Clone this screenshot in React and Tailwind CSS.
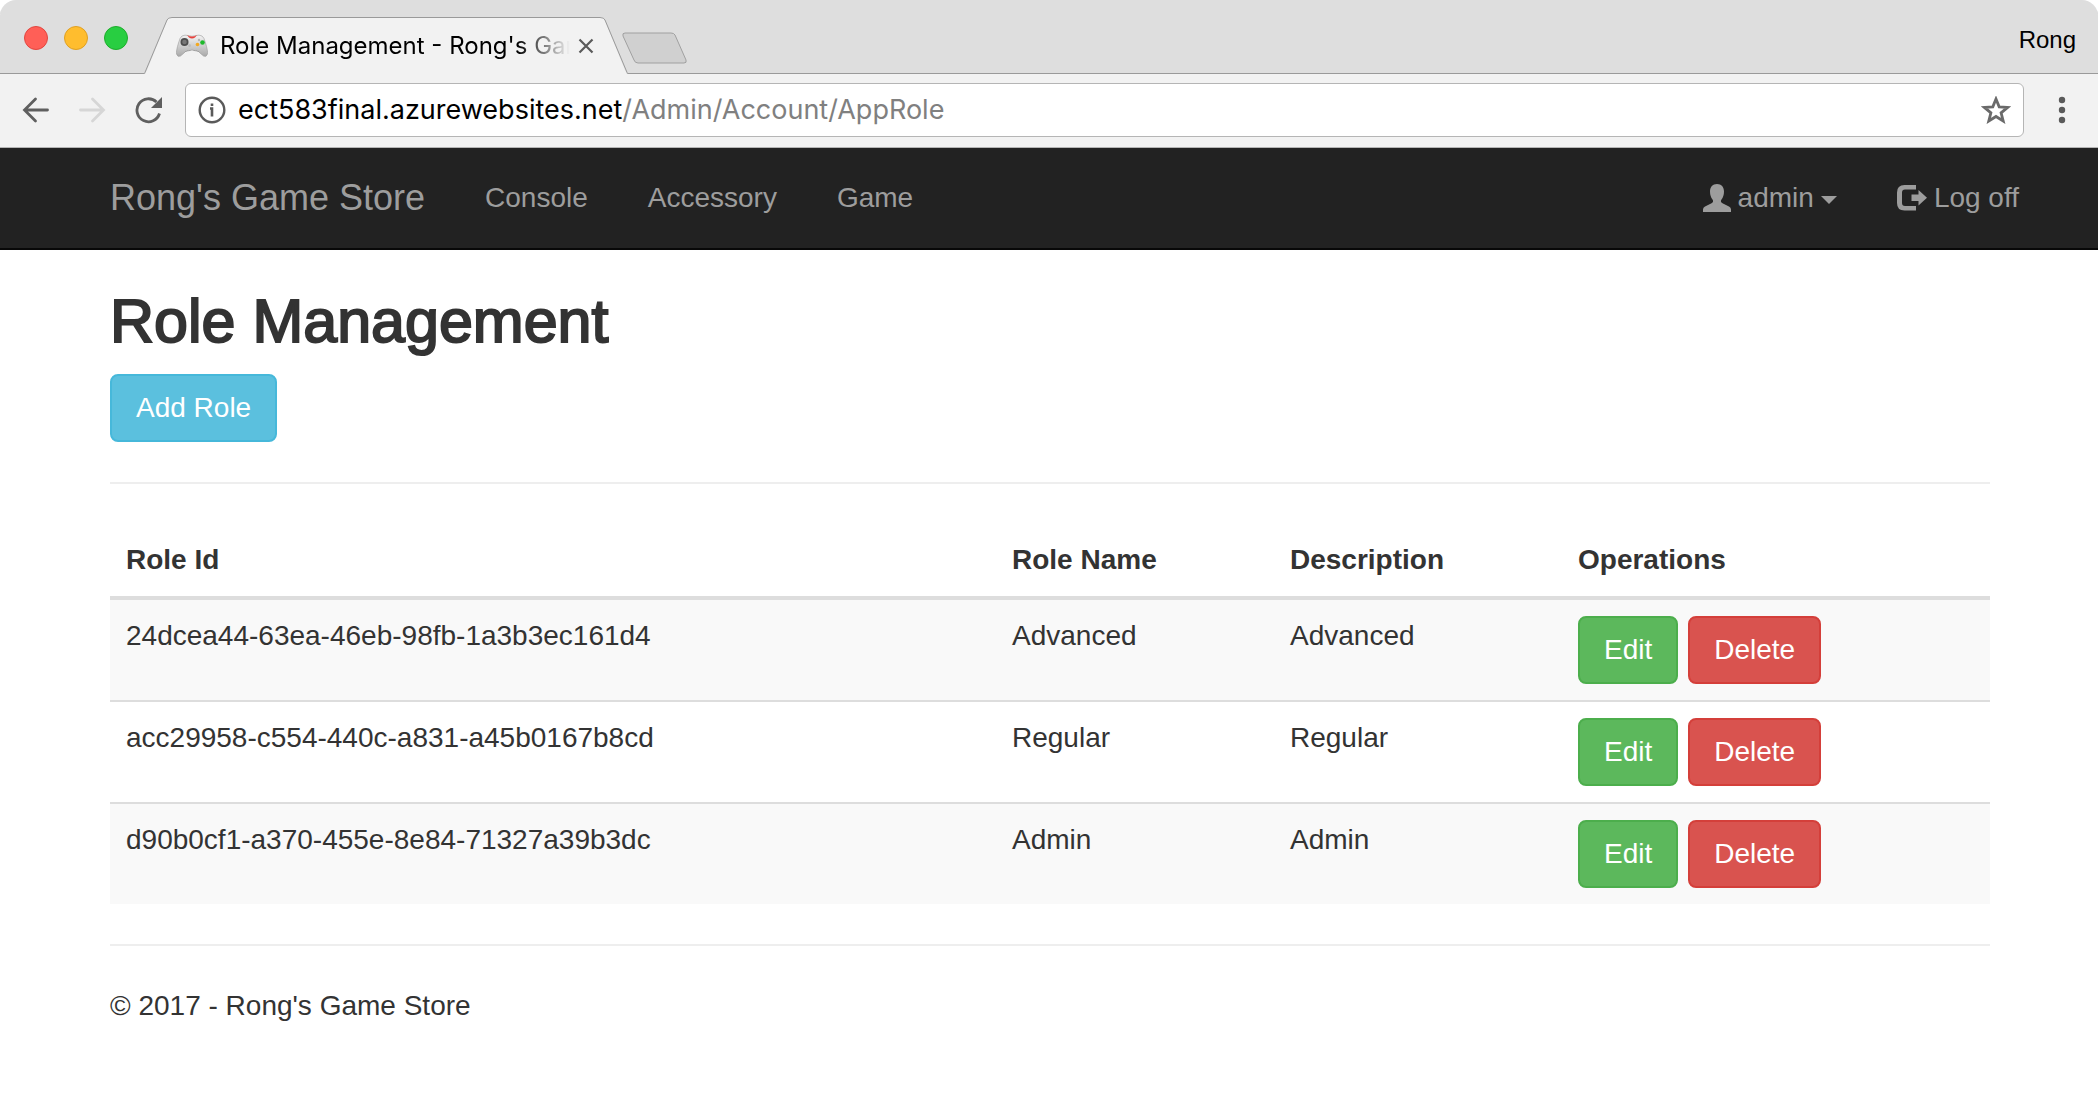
import { useState } from "react";

const roles = [
  { id: "24dcea44-63ea-46eb-98fb-1a3b3ec161d4", name: "Advanced", description: "Advanced" },
  { id: "acc29958-c554-440c-a831-a45b0167b8cd", name: "Regular", description: "Regular" },
  { id: "d90b0cf1-a370-455e-8e84-71327a39b3dc", name: "Admin", description: "Admin" },
];

const btn = "rounded-lg border-2 px-6 py-3 text-[28px] leading-10 text-white";

function GamepadIcon() {
  return (
    <svg viewBox="0 0 32 32" className="size-8 shrink-0">
      <defs>
        <linearGradient id="pad" x1="0" y1="0" x2="0" y2="1">
          <stop offset="0" stopColor="#f4f4f4" />
          <stop offset="1" stopColor="#a9a9a9" />
        </linearGradient>
      </defs>
      <path
        d="M6 6 Q9 4.500 12 5.500 Q16 7 20 5.500 Q23 4.500 26 6 Q28 7 29.500 13 Q32 21 31.500 24 Q30.500 27.500 27.500 26 Q25 24 22.500 21.500 Q16 18.500 9.500 21.500 Q7 24 4.500 26 Q1.500 27.500 0.500 24 Q0 21 2.500 13 Q4 7 6 6Z"
        fill="url(#pad)"
        stroke="#9a9a9a"
        strokeWidth="0.6"
      />
      <path d="M9.500 21.500 Q16 18.500 22.500 21.500 L25 24 Q22 20 16 20 Q10 20 7 24Z" fill="#333" />
      <path d="M11 5 Q16 8 21 5 L19 7.500 Q16 9.500 13 7.500Z" fill="#e8413c" />
      <circle cx="8.500" cy="12" r="4" fill="#4e4e4e" />
      <circle cx="8.500" cy="12" r="2.300" fill="#777" />
      <circle cx="26.500" cy="12.500" r="2.300" fill="#1db92b" />
      <circle cx="21.500" cy="14.500" r="1.800" fill="#f4a81d" />
      <circle cx="23" cy="10" r="1.200" fill="#b5b5b5" />
      <circle cx="13.500" cy="15.500" r="1.500" fill="#bdbdbd" />
    </svg>
  );
}

function TabStrip() {
  return (
    <div className="flex h-[74px] items-end justify-between rounded-t-2xl bg-[#dedede] shadow-[inset_0_-1px_0_#9a9a9a]">
      <div className="flex items-end">
        <div className="flex h-[74px] w-[144px] items-center gap-4 pt-[2px] pl-6" aria-label="Window controls">
          <button aria-label="Close window" className="size-6 rounded-full border border-[#e2463f] bg-[#ff5f57]" />
          <button aria-label="Minimize window" className="size-6 rounded-full border border-[#dfa023] bg-[#ffbd2e]" />
          <button aria-label="Zoom window" className="size-6 rounded-full border border-[#1dad2b] bg-[#28ce41]" />
        </div>
        <div className="flex items-end">
          <svg viewBox="0 0 28 57" className="h-[57px] w-7">
            <path d="M0 57 Q2 56 3 53 L23 4 Q24 0 28 0 V57Z" fill="#f2f2f2" />
            <path d="M0 56.500 Q1 56 2 53 L23 3 Q24 0.500 28 0.500" fill="none" stroke="#9a9a9a" />
          </svg>
          <div className="flex h-[57px] w-[428px] items-center border-t border-[#9a9a9a] bg-[#f2f2f2] pl-1">
            <GamepadIcon />
            <span className="ml-3 w-[350px] overflow-hidden whitespace-nowrap bg-linear-to-r from-black from-85% to-transparent bg-clip-text font-['Inter',sans-serif] text-[24px] text-transparent">
              Role Management - Rong's Game Store
            </span>
            <button aria-label="Close tab" className="ml-2">
              <svg viewBox="0 0 16 16" className="size-4">
                <path d="M1.500 1.500L14.500 14.500M14.500 1.500L1.500 14.500" stroke="#5a5a5a" strokeWidth="2.200" />
              </svg>
            </button>
          </div>
          <svg viewBox="0 0 28 57" className="h-[57px] w-7">
            <path d="M28 57 Q26 56 25 53 L5 4 Q4 0 0 0 V57Z" fill="#f2f2f2" />
            <path d="M28 56.500 Q27 56 26 53 L5 3 Q4 0.500 0 0.500" fill="none" stroke="#9a9a9a" />
          </svg>
        </div>
        <button aria-label="New tab" className="-ml-1.5 mb-[10px]">
          <svg viewBox="0 0 66 32" className="h-8 w-[66px]">
            <path d="M3 1 H49 Q52 1 53 3 L64 28 Q65 31 62 31 H16 Q13 31 12 28 L1 4 Q0 1 3 1Z" fill="#d0d0d0" stroke="#a0a0a0" />
          </svg>
        </button>
      </div>
      <span className="pr-[22px] pb-[18px] text-[24px] leading-8 text-black">Rong</span>
    </div>
  );
}

function Toolbar() {
  return (
    <div className="flex h-[74px] items-center border-b border-[#b5b5b5] bg-[#f2f2f2] pr-8 pb-[2px] pl-[22px]">
      <button aria-label="Back">
        <svg viewBox="0 0 28 28" className="size-7" fill="none" stroke="#5f5f5f" strokeWidth="2.800" strokeLinecap="round">
          <path d="M25.500 14H3M13.500 3L2.500 14L13.500 25" />
        </svg>
      </button>
      <button aria-label="Forward" className="ml-7">
        <svg viewBox="0 0 28 28" className="size-7" fill="none" stroke="#d6d6d6" strokeWidth="2.800" strokeLinecap="round">
          <path d="M2.500 14H25M14.500 3L25.500 14L14.500 25" />
        </svg>
      </button>
      <button aria-label="Reload" className="ml-7">
        <svg viewBox="0 0 28 28" className="size-7">
          <path d="M25.500 17.500A11.500 11.500 0 1 1 22.500 6" fill="none" stroke="#5f5f5f" strokeWidth="2.800" />
          <path d="M28 1V12H17Z" fill="#5f5f5f" />
        </svg>
      </button>
      <div className="ml-[23px] flex h-[54px] flex-1 items-center rounded-md border border-[#b5b5b5] bg-white px-3 font-['Inter',sans-serif] text-[27px]">
        <svg viewBox="0 0 28 28" className="size-7">
          <circle cx="14" cy="14" r="12.300" fill="none" stroke="#5a5a5a" strokeWidth="2.400" />
          <path d="M12 12.500H14V20.500M14 7.500V10" fill="none" stroke="#5a5a5a" strokeWidth="2.600" />
        </svg>
        <div role="textbox" aria-label="Address" className="ml-3 flex-1 whitespace-nowrap text-[#808080]">
          <span className="text-black">ect583final.azurewebsites.net</span>/Admin/Account/AppRole
        </div>
        <button aria-label="Bookmark this page">
          <svg viewBox="0 0 30 28" className="h-7 w-[30px]">
            <path d="M15 3L18.200 10.800L26.600 11.400L20.100 16.800L22.200 25L15 20.500L7.800 25L9.900 16.800L3.400 11.400L11.800 10.800Z" fill="none" stroke="#6a6a6a" strokeWidth="2.800" />
          </svg>
        </button>
      </div>
      <button aria-label="Menu" className="ml-[34px]">
        <svg viewBox="0 0 8 28" className="h-7 w-2">
          <circle cx="4" cy="4" r="3.200" fill="#5a5a5a" />
          <circle cx="4" cy="14" r="3.200" fill="#5a5a5a" />
          <circle cx="4" cy="24" r="3.200" fill="#5a5a5a" />
        </svg>
      </button>
    </div>
  );
}

function Navbar() {
  const [open, setOpen] = useState(false);

  return (
    <nav className="flex items-center justify-between border-b-2 border-[#080808] bg-[#222] py-[30px] pr-[79px] pl-[110px] text-[28px] leading-10 text-[#9d9d9d]">
      <div className="flex items-center gap-[60px]">
        <a href="#" className="text-[36px]">Rong's Game Store</a>
        <a href="#console">Console</a>
        <a href="#accessory">Accessory</a>
        <a href="#game">Game</a>
      </div>
      <div className="flex items-center gap-[60px]">
        <button onClick={() => setOpen(!open)} aria-expanded={open} className="flex items-center gap-[7px]">
          <svg viewBox="0 0 28 28" className="size-7" fill="currentColor">
            <path d="M14 0C18.500 0 21 3 21 7.500C21 11 20 13.500 18.500 15.500C17.500 17 17.800 18.500 19.500 19.300L26 22.500Q28 23.500 28 25.500V28H0V25.500Q0 23.500 2 22.500L8.500 19.300C10.200 18.500 10.500 17 9.500 15.500C8 13.500 7 11 7 7.500C7 3 9.500 0 14 0Z" />
          </svg>
          admin
          <svg viewBox="0 0 16 8" className="mt-1 h-2 w-4" fill="currentColor">
            <path d="M0 0H16L8 8Z" />
          </svg>
        </button>
        <a href="#logoff" className="flex items-center gap-[7px]">
          <svg viewBox="0 0 30 28" className="h-7 w-[30px]" fill="currentColor">
            <path d="M19 1V5.500H8Q5 5.500 5 8.500V19Q5 22 8 22H19V26.500H7.500Q0 26.500 0 19V8.500Q0 1 7.500 1Z" />
            <path d="M21.500 6L30 13.800L21.500 21.500V17H14.500V10.500H21.500Z" />
          </svg>
          Log off
        </a>
      </div>
    </nav>
  );
}

function RoleTable() {
  return (
    <table className="w-full table-fixed text-left">
      <thead>
        <tr className="border-b-4 border-[#ddd]">
          <th className="p-4">Role Id</th>
          <th className="w-[278px] p-4">Role Name</th>
          <th className="w-[288px] p-4">Description</th>
          <th className="w-[428px] p-4">Operations</th>
        </tr>
      </thead>
      <tbody>
        {roles.map((role) => (
          <tr key={role.id} className="border-t-2 border-[#ddd] align-top odd:bg-[#f9f9f9]">
            <td className="p-4">{role.id}</td>
            <td className="p-4">{role.name}</td>
            <td className="p-4">{role.description}</td>
            <td className="p-4">
              <div className="flex gap-[10px]">
                <button className={`${btn} border-[#4cae4c] bg-[#5cb85c]`}>Edit</button>
                <button className={`${btn} border-[#d43f3a] bg-[#d9534f]`}>Delete</button>
              </div>
            </td>
          </tr>
        ))}
      </tbody>
    </table>
  );
}

export default function App() {
  return (
    <div className="min-h-screen bg-white font-['Liberation_Sans',Arial,sans-serif] text-[28px] leading-10 text-[#333]">
      <TabStrip />
      <Toolbar />
      <Navbar />
      <main className="pt-[38px] pr-[108px] pl-[110px]">
        <h2 className="text-[61px] leading-[66px] font-medium [-webkit-text-stroke:2px]">Role Management</h2>
        <button className={`${btn} mt-5 block border-[#46b8da] bg-[#5bc0de]`}>Add Role</button>
        <hr className="my-10 border-t-2 border-[#eee]" />
        <RoleTable />
        <hr className="my-10 border-t-2 border-[#eee]" />
        <footer>
          <p>© 2017 - Rong's Game Store</p>
        </footer>
      </main>
    </div>
  );
}
